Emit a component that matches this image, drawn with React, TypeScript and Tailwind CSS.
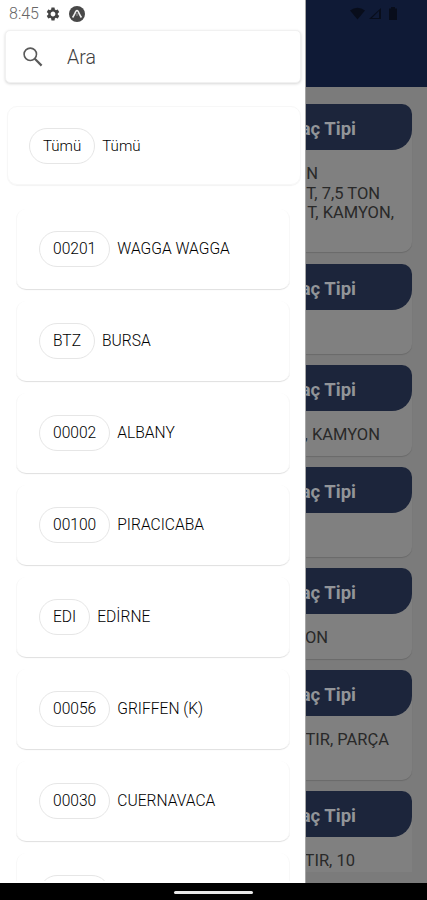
import { MdSettings } from 'react-icons/md';

type Place = { code: string; name: string };
type Line = { text: string; inset: string };
type Vehicle = { height: string; lines: Line[] };

const places: Place[] = [
  { code: '00201', name: 'WAGGA WAGGA' },
  { code: 'BTZ', name: 'BURSA' },
  { code: '00002', name: 'ALBANY' },
  { code: '00100', name: 'PIRACICABA' },
  { code: 'EDI', name: 'EDİRNE' },
  { code: '00056', name: 'GRIFFEN (K)' },
  { code: '00030', name: 'CUERNAVACA' },
];

const cardShadow = 'shadow-[0_1px_1px_rgba(0,0,0,0.14)]';

const vehicles: Vehicle[] = [
  {
    height: `h-[148px] mb-[12px] ${cardShadow}`,
    lines: [
      { text: 'ON', inset: 'pr-[94px]' },
      { text: 'T, 7,5 TON', inset: 'pr-[32px]' },
      { text: 'T, KAMYON,', inset: 'pr-[18px]' },
    ],
  },
  { height: `h-[90px] mb-[11px] ${cardShadow}`, lines: [] },
  { height: `h-[91px] mb-[11px] ${cardShadow}`, lines: [{ text: ', KAMYON', inset: 'pr-[32px]' }] },
  { height: `h-[90px] mb-[11px] ${cardShadow}`, lines: [] },
  { height: `h-[91px] mb-[11px] ${cardShadow}`, lines: [{ text: 'ON', inset: 'pr-[84px]' }] },
  { height: `h-[110px] mb-[11px] ${cardShadow}`, lines: [{ text: 'TIR, PARÇA', inset: 'pr-[23px]' }] },
  { height: 'h-[81px] rounded-b-none', lines: [{ text: 'TIR, 10', inset: 'pr-[57px]' }] },
];

function VehicleCard({ height, lines }: Vehicle) {
  return (
    <article className={`shrink-0 rounded-[10px] bg-[#808080] ${height}`}>
      <h3 className="flex h-[46px] items-center justify-end rounded-tr-[10px] rounded-br-[20px] bg-[#1c253b] pr-[56px] pt-[5px] text-[18.5px] font-bold text-[#929599]">
        aç Tipi
      </h3>
      <div className="pt-[14px] text-right text-[16.5px] leading-[19.5px] text-[#292929]">
        {lines.map((line) => (
          <p key={line.text} className={`whitespace-nowrap ${line.inset}`}>
            {line.text}
          </p>
        ))}
      </div>
    </article>
  );
}

function Chip({ children }: { children?: string }) {
  return (
    <span className="flex h-[36px] items-center rounded-full border border-[#e6e6e6] px-[13px] pt-[1px]">
      {children}
    </span>
  );
}

function PlaceCard({ code, name }: Place) {
  return (
    <li className="flex h-[80px] shrink-0 items-center gap-[7px] rounded-[10px] border-x border-[#f8f8f8] pl-[22px] shadow-[0_1px_1px_rgba(0,0,0,0.13)]">
      <Chip>{code}</Chip>
      <span className="pt-[1px]">{name}</span>
    </li>
  );
}

function Drawer() {
  return (
    <aside className="absolute left-0 top-0 flex h-[883px] w-[306px] flex-col overflow-hidden border-r border-[#a5a5a5] bg-white">
      <div className="flex h-[30px] shrink-0 items-center pl-[9px] pb-[2px] text-[16px] text-[#666]">
        <span className="w-[36px] font-light">8:45</span>
        <MdSettings className="size-[16px] text-[#444]" />
        <svg className="ml-[8px] size-[16px]" viewBox="0 0 16 16">
          <circle cx="8" cy="8" r="8" fill="#484848" />
          <path d="M3.6 11.5C5 9.5 6.2 6.5 7 5.2q1-1.4 2 0c.8 1.3 2 4.3 3.4 6.3" fill="none" stroke="#eee" strokeWidth="1.6" />
          <path d="M8 7v3" stroke="#999" strokeWidth="1" />
        </svg>
      </div>
      <label className="ml-[5px] mr-[4px] flex h-[53px] shrink-0 items-center rounded-[5px] border border-[#f1f1f1] bg-white pl-[17px] shadow-[0_1px_3px_rgba(0,0,0,0.16)]">
        <svg className="size-[20px]" viewBox="0 0 20 20" fill="none" stroke="#5a5a5a">
          <circle cx="7.3" cy="7.3" r="6.2" strokeWidth="1.6" />
          <path d="M11.8 11.8l6.8 6.8" strokeWidth="2.2" />
        </svg>
        <span className="pl-[24px] pt-[3px] text-[19.5px] font-light text-[#3f3f3f]">Ara</span>
      </label>

      <div className="ml-[7px] mr-[4px] mt-[23px] flex h-[79px] shrink-0 items-center gap-[7px] rounded-[10px] border border-[#f7f7f7] pl-[21px] text-[15.1px] font-light text-black shadow-[0_1px_1px_rgba(0,0,0,0.05)]">
        <Chip>Tümü</Chip>
        <span className="pt-[1px]">Tümü</span>
      </div>

      <ul className="ml-[16px] mr-[15px] mt-[24px] flex h-[672px] shrink-0 flex-col gap-[12px] overflow-hidden pb-px text-[15.6px] font-light text-black">
        {places.map((place) => (
          <PlaceCard key={place.code} {...place} />
        ))}
        <li className="flex h-[80px] shrink-0 rounded-t-[10px] border-x border-[#f8f8f8] pl-[22px] pt-[22px]">
          <span className="h-[36px] w-[71px] rounded-full border border-[#e6e6e6]" />
        </li>
      </ul>
    </aside>
  );
}

export default function App() {
  return (
    <div className="relative flex h-[900px] w-[427px] flex-col overflow-hidden bg-[#7b7b7b] font-['Roboto',sans-serif]">
      <header className="flex h-[87px] shrink-0 items-start justify-end bg-[#0f1a36] pr-[29px] pt-[7px]">
        <svg className="h-[14px] w-[48px]" viewBox="0 0 48 14" fill="#080d1b">
          <path d="M0 3.5Q7.5-2 15 3.5L7.5 12.5z" />
          <path d="M31 1v11H19z" />
          <path d="M29 4v7h-7z" fill="#0f1a36" />
          <path d="M39 1.5h2V0h4v1.5h2V13h-8z" />
        </svg>
      </header>
      <main className="flex min-h-0 flex-1 flex-col overflow-hidden pl-[15px] pr-[15px] pt-[17px]">
        {vehicles.map((vehicle, i) => (
          <VehicleCard key={i} {...vehicle} />
        ))}
      </main>
      <footer className="flex h-[17px] shrink-0 justify-center bg-black pt-[8px]">
        <span className="h-[3px] w-[79px] rounded-full bg-[#e8e8e8]" />
      </footer>
      <Drawer />
    </div>
  );
}
